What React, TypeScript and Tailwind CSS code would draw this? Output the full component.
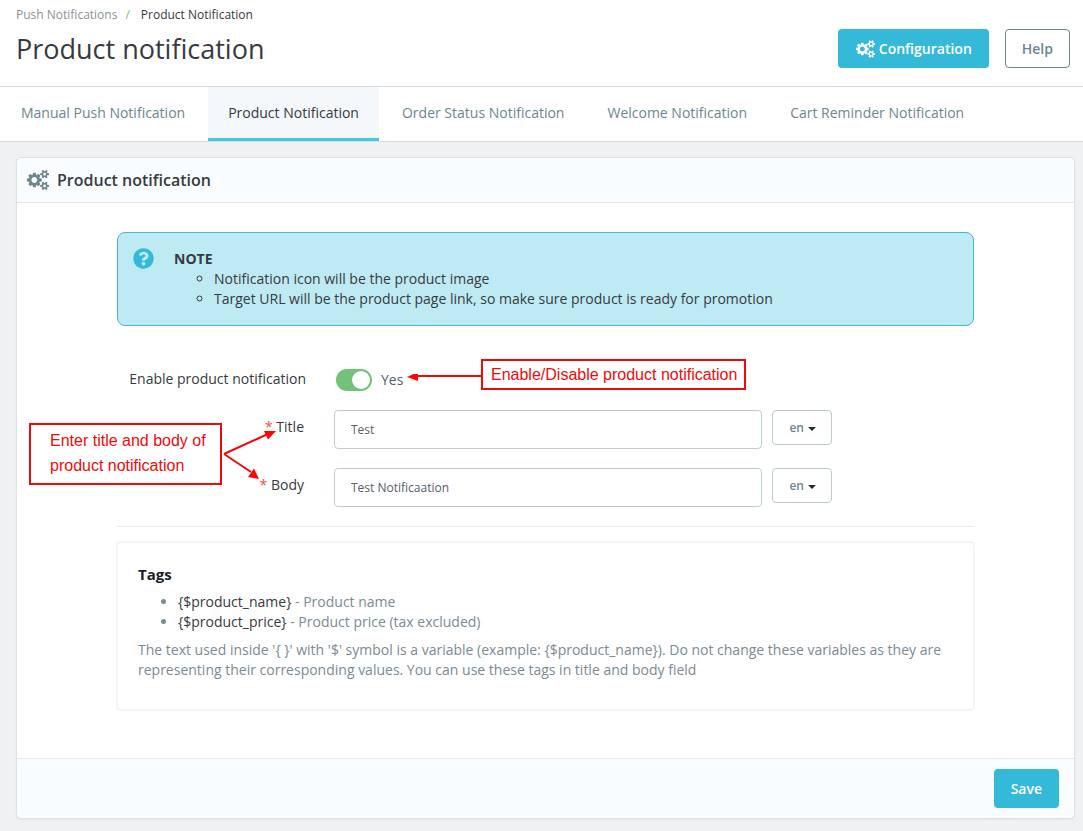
import { useState } from "react";
import { FaQuestionCircle } from "react-icons/fa";

const tabs = [
  "Manual Push Notification",
  "Product Notification",
  "Order Status Notification",
  "Welcome Notification",
  "Cart Reminder Notification",
];

const smallGear =
  "v140q0 16-149 31-12 27-30 52 51 113 51 138 0 4-4 7-122 71-124 71-8 0-46-47t-52-68q-20 2-30 2t-30-2q-14 21-52 68t-46 47q-2 0-124-71-4-3-4-7 0-25 51-138-18-25-30-52-149-15-149-31v-140q0-16 149-31 13-29 30-52-51-113-51-138 0-4 4-7 4-2 35-20t59-34 30-16q8 0 46 46.500t52 67.500q20-2 30-2t30 2q51-71 92-112l6-2q4 0 124 70 4 3 4 7 0 25-51 138 17 23 30 52 149 15 149 31z";
const cogsPath =
  "M896 896q0-106-75-181t-181-75-181 75-75 181 75 181 181 75 181-75 75-181zm768 512q0-52-38-90t-90-38-90 38-38 90q0 53 37.500 90.500t90.500 37.500 90.500-37.500 37.500-90.500zm0-1024q0-52-38-90t-90-38-90 38-38 90q0 53 37.500 90.500t90.500 37.500 90.500-37.500 37.500-90.500zm-384 421v185q0 10-7 19.500t-16 10.500l-155 24q-11 35-32 76 34 48 90 115 7 11 7 20 0 12-7 19-23 30-82.500 89.500t-78.500 59.500q-11 0-21-7l-115-90q-37 19-77 31-11 108-23 155-7 24-30 24h-186q-11 0-20-7.500t-10-17.500l-23-153q-34-10-75-31l-118 89q-7 7-20 7-11 0-21-8-144-133-144-160 0-9 7-19 10-14 41-53t47-61q-23-44-35-82l-152-24q-10-1-17-9.500t-7-19.500v-185q0-10 7-19.500t16-10.500l155-24q11-35 32-76-34-48-90-115-7-11-7-20 0-12 7-20 22-30 82-89t79-59q11 0 21 7l115 90q34-18 77-32 11-108 23-154 7-24 30-24h186q11 0 20 7.500t10 17.500l23 153q34 10 75 31l118-89q8-7 20-7 11 0 21 8 144 133 144 160 0 8-7 19-12 16-42 54t-45 60q23 48 34 82l152 23q10 2 17 10.500t7 19.500zm640 533" +
  smallGear +
  "m0-1024" +
  smallGear;

function Cogs({ className }: { className: string }) {
  return (
    <svg viewBox="0 0 1920 1792" fill="currentColor" className={className} aria-hidden="true">
      <path d={cogsPath} />
    </svg>
  );
}

function FieldRow({ id, label, value }: { id: string; label: string; value: string }) {
  return (
    <div className="grid grid-cols-[187px_13fr_6fr] items-start">
      <label htmlFor={id} className="pt-[7px] text-right leading-5">
        <span className="text-[#f54c3e]">*</span> {label}
      </label>
      <input
        id={id}
        defaultValue={value}
        className="ml-[30px] h-[39px] rounded-sm border border-[#bbcdd2] bg-white px-4 text-xs text-[#576069] outline-none"
      />
      <div className="relative ml-[10px] w-[60px]">
        <select
          aria-label={`${label} language`}
          className="h-[35px] w-full appearance-none rounded-sm border border-[#bbcdd2] bg-white pl-4 text-xs font-semibold text-[#6c868e] outline-none"
        >
          <option>en</option>
        </select>
        <svg
          viewBox="0 0 8 4"
          className="pointer-events-none absolute top-[17px] right-4 h-1 w-2 fill-[#25292b]"
          aria-hidden="true"
        >
          <path d="M0 0h8L4 4z" />
        </svg>
      </div>
    </div>
  );
}

export default function App() {
  const [enabled, setEnabled] = useState(true);
  return (
    <div className="min-h-screen bg-[#eff1f2] pb-3 font-['Open_Sans',sans-serif] text-sm text-[#363a41]">
      <header className="flex justify-between bg-white pr-[13px] pl-4">
        <div>
          <nav className="flex gap-2 pt-[7px] text-xs leading-4" aria-label="Breadcrumb">
            <a href="#" className="text-[#8b9296]">Push Notifications</a>
            <span className="pr-[3px] text-[#72c279]">/</span>
            <span>Product Notification</span>
          </nav>
          <h1 className="pt-1.5 pb-[17px] text-[27px] leading-10">Product notification</h1>
        </div>
        <div className="flex gap-4 pt-[29px]">
          <button className="flex h-[39px] items-center gap-1 rounded-sm bg-[#34b9d9] pr-[17px] pl-[18px] font-semibold text-white">
            <Cogs className="h-[18px] w-[19px]" />
            Configuration
          </button>
          <button className="h-[39px] rounded-sm border border-[#6c868e] px-4 font-semibold text-[#6c868e]">Help</button>
        </div>
      </header>
      <nav className="flex gap-[3px] border-y border-[#d9dddf] bg-white pl-px" aria-label="Notification types">
        {tabs.map((t, i) => (
          <a
            key={t}
            href="#"
            className={
              i === 1
                ? "h-[54px] border-b-3 border-[#4ac7e0] bg-[#f4f8fb] px-5 pt-4 leading-5 text-[#363a41]"
                : "h-[54px] px-5 pt-4 leading-5 text-[#6c868e]"
            }
          >
            {t}
          </a>
        ))}
      </nav>

      <main className="mt-[15px] mr-2 ml-4 rounded-[5px] border border-[#dbe2e6] bg-white shadow-xs">
        <div className="flex h-[45px] items-center gap-2 rounded-t-[5px] border-b border-[#dfe5e8] bg-[#fafdff] pl-2.5">
          <Cogs className="h-[22px] w-[22px] text-[#6c868e]" />
          <h2 className="text-base font-semibold">Product notification</h2>
        </div>

        <div className="px-[100px] pt-[29px] pb-[47px]">
          <section className="flex gap-5 rounded-lg border border-[#4ab5ce] bg-[#beeaf3] px-[15px] py-4 leading-5">
            <FaQuestionCircle className="-mt-px size-[21px] shrink-0 text-[#34b9d9]" />
            <div>
              <p className="font-bold">NOTE</p>
              <ul className="list-[circle] pl-10">
                <li>Notification icon will be the product image</li>
                <li>Target URL will be the product page link, so make sure product is ready for promotion</li>
              </ul>
            </div>
          </section>

          <form className="relative pt-[43px]">
            <div className="flex h-[22px] items-center">
              <label htmlFor="enable" className="w-[189px] pb-0.5 text-right leading-5">Enable product notification</label>
              <input
                id="enable"
                type="checkbox"
                role="switch"
                checked={enabled}
                onChange={() => setEnabled(!enabled)}
                className="ml-[30px] h-[22px] w-9 appearance-none rounded-full bg-[#b3c7cd] p-0.5 before:block before:size-[18px] before:rounded-full before:bg-white checked:bg-[#72c279] checked:before:ml-[14px]"
              />
              <span className="ml-[9px] text-[#576069]">{enabled ? "Yes" : "No"}</span>
            </div>
            <div className="mt-[19px] flex flex-col gap-[19px] border-b border-[#e9eced] pb-[19px]">
              <FieldRow id="title" label="Title" value="Test" />
              <FieldRow id="body" label="Body" value="Test Notificaation" />
            </div>

            <p className="absolute top-[33px] left-[364px] h-[31px] w-[265px] border-2 border-[#f00a0a] bg-white pl-2 font-['Liberation_Sans',sans-serif] text-base leading-[27px] text-[#f00a0a]">
              Enable/Disable product notification
            </p>
            <p className="absolute top-[97px] left-[-88px] h-[62px] w-[193px] border-2 border-[#f00a0a] bg-white pt-[3px] pl-[19px] font-['Liberation_Sans',sans-serif] text-base leading-[25px] text-[#f00a0a]">
              Enter title and body of product notification
            </p>
            <svg
              viewBox="0 0 258 108"
              className="pointer-events-none absolute top-[48px] left-[106px] h-[108px] w-[258px]"
              aria-hidden="true"
            >
              <path d="M258 2H192M1 80L45 60M1 80L28 98" className="fill-none stroke-[#f00a0a] stroke-2" />
              <path d="M184 3l11-5v9zM53 57l-12 0 4 8.500zM36 105l-5-10.500-6 8.500z" className="fill-[#fb0505]" />
            </svg>
          </form>

          <section className="mt-3.5 -mr-px -ml-px rounded-sm border-2 border-[#f5f5f5] px-5 pt-[21px] pb-[29px] leading-5 text-[#7c8a93]">
            <h3 className="text-[15px] leading-5 font-bold text-[#1d2226]">Tags</h3>
            <ul className="list-disc pt-2 pb-2 pl-10">
              <li><span className="text-[#363a41]">{"{$product_name}"}</span> - Product name</li>
              <li><span className="text-[#363a41]">{"{$product_price}"}</span> - Product price (tax excluded)</li>
            </ul>
            <p>
              {"The text used inside '{ }' with '$' symbol is a variable (example: {$product_name}). Do not change these variables as they are representing their corresponding values. You can use these tags in title and body field"}
            </p>
          </section>
        </div>

        <footer className="flex justify-end rounded-b-[5px] border-t border-[#e4e9eb] bg-[#fafdff] px-[15px] py-2.5">
          <button className="h-[39px] rounded-sm bg-[#34b9d9] px-[17px] font-semibold text-white">Save</button>
        </footer>
      </main>
    </div>
  );
}
